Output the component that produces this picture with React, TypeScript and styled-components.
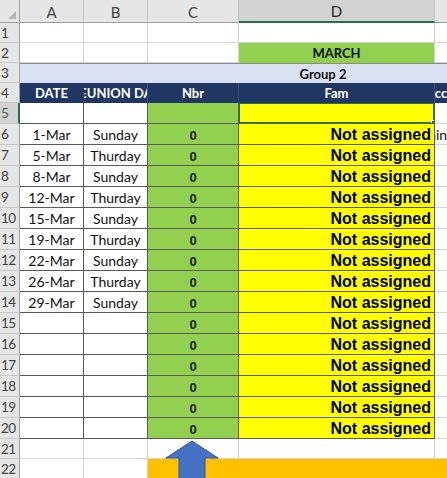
import styled, { createGlobalStyle } from "styled-components";

const GlobalStyle = createGlobalStyle`
  body {
    margin: 0;
    background: #ffffff;
  }
  * {
    box-sizing: border-box;
  }
`;

const GRID = "#d4d4d4";
const DARK = "#5a5a5a";
const NAVY = "#203764";
const GREEN = "#92d050";
const YELLOW = "#ffff00";
const ORANGE = "#ffc000";
const BLUE = "#d9e1f2";
const EXCEL_GREEN = "#217346";

const W = { A: 64, B: 64, C: 91, D: 196, E: 120 };

const Sheet = styled.div`
  position: relative;
  width: 447px;
  height: 478px;
  overflow: hidden;
  font-family: Lato, "Liberation Sans", sans-serif;
  font-size: 14px;
  color: #000;
`;

const Row = styled.div<{ $h: number }>`
  display: flex;
  height: ${(p) => p.$h}px;
`;

const Corner = styled.div`
  width: 20px;
  flex-shrink: 0;
  background: #e6e6e6;
  border-right: 1px solid #9f9f9f;
  border-bottom: 1px solid #9f9f9f;
  display: flex;
  align-items: flex-end;
  justify-content: flex-end;
  padding: 0 3px 3px 0;
`;

const ColHead = styled.div<{ $w: number; $active?: boolean }>`
  width: ${(p) => p.$w}px;
  flex-shrink: 0;
  background: ${(p) => (p.$active ? "#d2d2d2" : "#e6e6e6")};
  border-right: 1px solid #c6c6c6;
  border-bottom: ${(p) => (p.$active ? `2px solid ${EXCEL_GREEN}` : "1px solid #9f9f9f")};
  color: ${(p) => (p.$active ? "#262626" : "#444")};
  font-size: 15px;
  display: flex;
  align-items: center;
  justify-content: center;
  padding-top: 1px;
`;

const RowHead = styled.div<{ $active?: boolean }>`
  width: 20px;
  flex-shrink: 0;
  background: ${(p) => (p.$active ? "#d2d2d2" : "#e6e6e6")};
  border-right: ${(p) => (p.$active ? `2px solid ${EXCEL_GREEN}` : "1px solid #9f9f9f")};
  border-bottom: 1px solid #c6c6c6;
  color: ${(p) => (p.$active ? "#3c6e50" : "#444")};
  font-size: 13.5px;
  display: flex;
  align-items: center;
  padding-left: 1px;
  letter-spacing: -0.5px;
`;

const Cell = styled.div<{
  $w: number;
  $bg?: string;
  $line?: string;
  $right?: string;
  $align?: string;
}>`
  position: relative;
  width: ${(p) => p.$w}px;
  flex-shrink: 0;
  background: ${(p) => p.$bg || "#fff"};
  border-right: 1px solid ${(p) => p.$right || p.$line || GRID};
  border-bottom: 1px solid ${(p) => p.$line || GRID};
  display: flex;
  align-items: center;
  justify-content: ${(p) => p.$align || "center"};
  overflow: hidden;
  white-space: nowrap;
  padding: 0 3px;
`;

const Merged = styled.div`
  width: 606px;
  flex-shrink: 0;
  background: ${BLUE};
  display: flex;
  align-items: center;
  justify-content: center;
  font-weight: 700;
  font-size: 13px;
  color: #111;
  border-top: 1px solid #8a8a8a;
`;

const Bold = styled.span`
  font-weight: 700;
  font-size: 13px;
  color: #111;
`;

const HeadText = styled.span`
  font-weight: 700;
  font-size: 13px;
  color: #fff;
`;

const Zero = styled.span`
  font-family: "Liberation Sans", Arial, sans-serif;
  font-weight: 700;
  font-size: 13px;
  color: #1a1a1a;
  margin-top: 2px;
`;

const Fam = styled.span`
  font-family: "Liberation Sans", Arial, sans-serif;
  font-weight: 700;
  font-size: 16px;
  color: #000;
  margin-top: 1px;
`;

const Plain = styled.span`
  font-size: 14px;
  color: #111;
`;

const Clipped = styled.span<{ $shift: number }>`
  margin-left: ${(p) => p.$shift}px;
`;

const Selected = styled.div`
  position: absolute;
  left: -1px;
  top: -1px;
  right: -1px;
  bottom: -1px;
  border: 2px solid ${EXCEL_GREEN};
  pointer-events: none;
`;

const Handle = styled.div`
  position: absolute;
  right: -4px;
  bottom: -4px;
  width: 6px;
  height: 6px;
  background: ${EXCEL_GREEN};
  border: 1px solid #fff;
`;

const ArrowShape = styled.svg`
  position: absolute;
  left: 165px;
  top: 440px;
`;

const dates: [string, string][] = [
  ["1-Mar", "Sunday"],
  ["5-Mar", "Thurday"],
  ["8-Mar", "Sunday"],
  ["12-Mar", "Thurday"],
  ["15-Mar", "Sunday"],
  ["19-Mar", "Thurday"],
  ["22-Mar", "Sunday"],
  ["26-Mar", "Thurday"],
  ["29-Mar", "Sunday"],
];

const dataRows = Array.from({ length: 15 }, (_, i) => dates[i] || ["", ""]);

export default function App() {
  return (
    <>
      <GlobalStyle />
      <Sheet>
        <Row $h={23}>
          <Corner>
            <svg width="8" height="8" viewBox="0 0 8 8">
              <polygon points="8,0 8,8 0,8" fill="#b5b5b5" />
            </svg>
          </Corner>
          <ColHead $w={W.A}>A</ColHead>
          <ColHead $w={W.B}>B</ColHead>
          <ColHead $w={W.C}>C</ColHead>
          <ColHead $w={W.D} $active>
            D
          </ColHead>
          <ColHead $w={W.E}>E</ColHead>
        </Row>

        <Row $h={20}>
          <RowHead>1</RowHead>
          <Cell $w={W.A} />
          <Cell $w={W.B} />
          <Cell $w={W.C} />
          <Cell $w={W.D} />
          <Cell $w={W.E} />
        </Row>

        <Row $h={20}>
          <RowHead>2</RowHead>
          <Cell $w={W.A} />
          <Cell $w={W.B} />
          <Cell $w={W.C} />
          <Cell $w={W.D} $bg={GREEN} $line={GREEN} $right={GRID}>
            <Bold>MARCH</Bold>
          </Cell>
          <Cell $w={W.E} />
        </Row>

        <Row $h={20}>
          <RowHead>3</RowHead>
          <Merged>Group 2</Merged>
        </Row>

        <Row $h={20}>
          <RowHead>4</RowHead>
          <Cell $w={W.A} $bg={NAVY} $line={NAVY}>
            <HeadText>DATE</HeadText>
          </Cell>
          <Cell $w={W.B} $bg={NAVY} $line={NAVY} $right="#3b4f78">
            <HeadText>REUNION DAY</HeadText>
          </Cell>
          <Cell $w={W.C} $bg={NAVY} $line={NAVY} $right="#3b4f78">
            <HeadText>Nbr</HeadText>
          </Cell>
          <Cell $w={W.D} $bg={NAVY} $line={NAVY} $right="#3b4f78">
            <HeadText>Fam</HeadText>
          </Cell>
          <Cell $w={W.E} $bg={NAVY} $line={NAVY} $align="flex-start">
            <HeadText>
              <Clipped $shift={-12}>Accident</Clipped>
            </HeadText>
          </Cell>
        </Row>

        <Row $h={21}>
          <RowHead $active>5</RowHead>
          <Cell $w={W.A} $line={DARK} />
          <Cell $w={W.B} $line={DARK} />
          <Cell $w={W.C} $bg={GREEN} $line={DARK} />
          <Cell $w={W.D} $bg={YELLOW} $line={DARK}>
            <Selected>
              <Handle />
            </Selected>
          </Cell>
          <Cell $w={W.E} />
        </Row>

        {dataRows.map(([date, day], i) => (
          <Row $h={21} key={i}>
            <RowHead>{i + 6}</RowHead>
            <Cell $w={W.A} $line={DARK}>
              <Plain>{date}</Plain>
            </Cell>
            <Cell $w={W.B} $line={DARK}>
              <Plain>{day}</Plain>
            </Cell>
            <Cell $w={W.C} $bg={GREEN} $line={DARK}>
              <Zero>0</Zero>
            </Cell>
            <Cell $w={W.D} $bg={YELLOW} $line={DARK} $align="flex-end">
              <Fam>Not assigned</Fam>
            </Cell>
            <Cell $w={W.E} $align="flex-start">
              {i === 0 && (
                <Plain>
                  <Clipped $shift={-32}>Dominic</Clipped>
                </Plain>
              )}
            </Cell>
          </Row>
        ))}

        <Row $h={20}>
          <RowHead>21</RowHead>
          <Cell $w={W.A} />
          <Cell $w={W.B} />
          <Cell $w={W.C} />
          <Cell $w={W.D} />
          <Cell $w={W.E} />
        </Row>

        <Row $h={20}>
          <RowHead>22</RowHead>
          <Cell $w={W.A} />
          <Cell $w={W.B} />
          <Cell $w={W.C} $bg={ORANGE} $line={ORANGE} />
          <Cell $w={W.D} $bg={ORANGE} $line={ORANGE} />
          <Cell $w={W.E} $bg={ORANGE} $line={ORANGE} />
        </Row>

        <ArrowShape width="54" height="40" viewBox="0 0 54 40">
          <polygon
            points="27,1 53,18 40,18 40,40 14,40 14,18 1,18"
            fill="#4472c4"
            stroke="#2f528f"
            strokeWidth="1"
          />
        </ArrowShape>
      </Sheet>
    </>
  );
}
